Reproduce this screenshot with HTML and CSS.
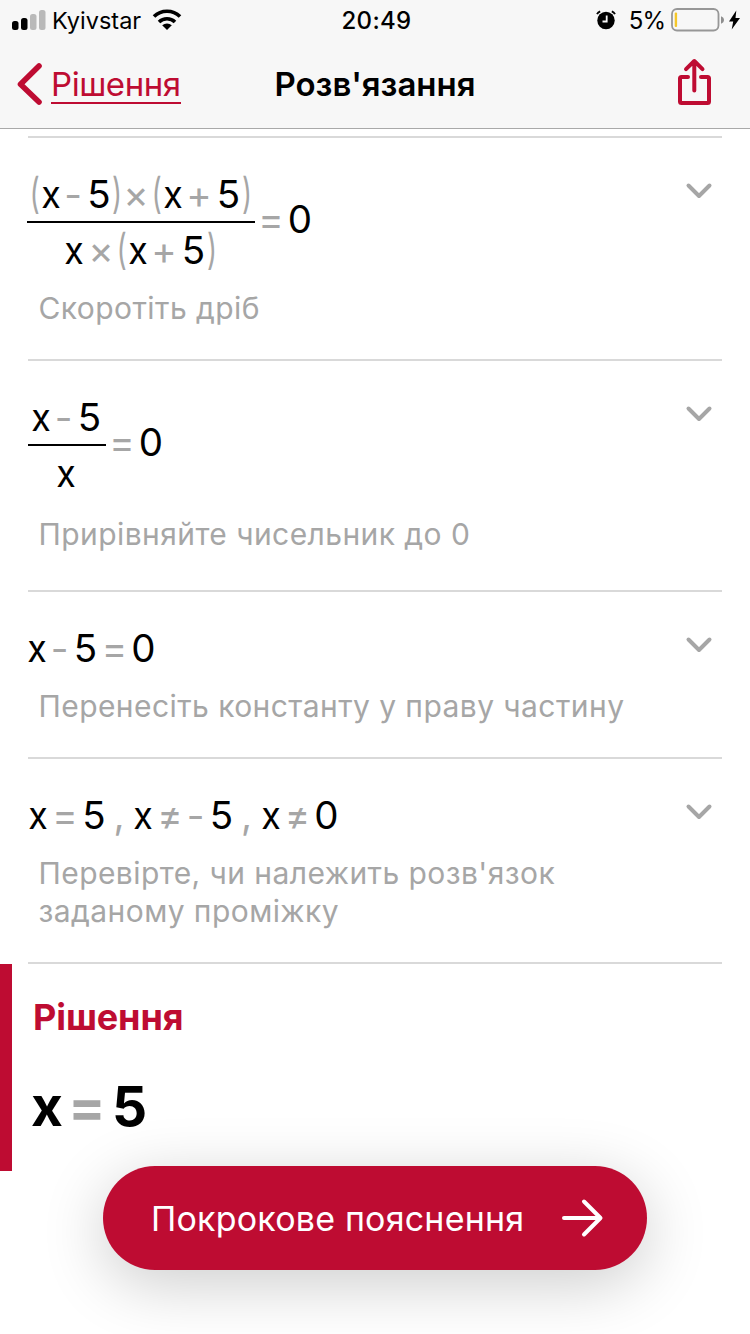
FILE: index.html
```html
<!DOCTYPE html>
<html lang="uk">
<head>
<meta charset="utf-8">
<title>Розв'язання</title>
<link rel="stylesheet" href="styles.css">
</head>
<body>
<div class="screen">
  <header class="header">
    <div class="status">
      <div class="status-left">
        <svg class="signal" width="34" height="22" viewBox="0 0 34 22"><rect x="0" y="12" width="6.500" height="9" rx="2.500"/><rect x="9" y="9" width="6.500" height="12" rx="2.500"/><rect class="dim" x="18" y="5" width="6.500" height="16" rx="2.500"/><rect class="dim" x="27" y="1" width="6.500" height="20" rx="2.500"/></svg>
        <span class="carrier">Kyivstar</span>
        <svg class="wifi" width="30" height="22" viewBox="0 0 30 22"><path d="M2 7.600a18.300 18.300 0 0 1 26 0M7 13a11.500 11.500 0 0 1 16 0" fill="none" stroke="#000" stroke-width="3.600"/><path d="M10.200 16.300a7 7 0 0 1 9.600 0L15 21z"/></svg>
      </div>
      <span class="clock">20:49</span>
      <div class="status-right">
        <svg class="alarm" width="20" height="20" viewBox="0 0 20 20"><circle cx="10" cy="10.500" r="8.700"/><path d="M1 4.200A6 6 0 0 1 4.200 1.300M15.800 1.300a6 6 0 0 1 3.200 2.900" fill="none" stroke="#000" stroke-width="1.800"/><path d="M10.700 5.500v6H6.500" fill="none" stroke="#f7f7f7" stroke-width="1.800"/></svg>
        <span class="percent">5%</span>
        <svg class="battery" width="54" height="24" viewBox="0 0 54 24"><rect x="1" y="1" width="46.500" height="21.500" rx="5" fill="none" stroke="#979797" stroke-width="1.800"/><rect x="3.700" y="4.500" width="2.400" height="14.500" rx="1" fill="#f5c72a"/><path d="M50 8.300c4 1.500 4 6 0 7.500z" fill="#8e8e8e"/></svg>
        <svg class="bolt" width="13" height="20" viewBox="0 0 13 20"><path d="M8.300 0.500L1 11.500h4.200L3.700 19.500 12 8H7.500z"/></svg>
      </div>
    </div>
    <nav class="nav">
      <a class="back"><svg width="26" height="44" viewBox="0 0 26 44"><path d="M22 4L3.500 22.300 22 40" fill="none" stroke="currentColor" stroke-width="5.600" stroke-linecap="round" stroke-linejoin="round"/></svg><span class="back-label">Рішення</span></a>
      <h1 class="title">Розв'язання</h1>
      <svg class="share" width="34" height="48" viewBox="0 0 34 48"><path d="M11 19H4.500Q3 19 3 20.500v23Q3 45 4.500 45h26Q32 45 32 43.500v-23Q32 19 30.500 19H24M17.300 32.500V4M9 11.200L17.300 3l8.200 8.200" fill="none" stroke="currentColor" stroke-width="4" stroke-linecap="round" stroke-linejoin="round"/></svg>
    </nav>
  </header>

  <main class="steps">
    <section class="step step-reduce">
      <div class="math">
        <div class="fraction">
          <div class="row numerator"><i class="open">(</i><b>x</b><i class="minus">-</i><b class="num">5</b><i class="close">)</i><i class="times">×</i><i class="open">(</i><b>x</b><i class="plus">+</i><b class="num">5</b><i class="close">)</i></div>
          <div class="row denominator"><b>x</b><i class="times">×</i><i class="open">(</i><b>x</b><i class="plus">+</i><b class="num">5</b><i class="close">)</i></div>
        </div>
        <div class="row beside"><i class="eq">=</i><b class="num">0</b></div>
      </div>
      <p class="caption">Скоротіть дріб</p>
      <svg class="chevron" width="30" height="20" viewBox="0 0 30 20"><path d="M4.500 4.500L15 15 25.500 4.500"/></svg>
    </section>

    <section class="step step-numerator">
      <div class="math">
        <div class="fraction fraction-small">
          <div class="row numerator"><b>x</b><i class="minus">-</i><b class="num">5</b></div>
          <div class="row denominator"><b>x</b></div>
        </div>
        <div class="row beside"><i class="eq">=</i><b class="num">0</b></div>
      </div>
      <p class="caption">Прирівняйте чисельник до 0</p>
      <svg class="chevron" width="30" height="20" viewBox="0 0 30 20"><path d="M4.500 4.500L15 15 25.500 4.500"/></svg>
    </section>

    <section class="step step-move">
      <div class="math">
        <div class="row"><b>x</b><i class="minus">-</i><b class="num">5</b><i class="eq">=</i><b class="num">0</b></div>
      </div>
      <p class="caption">Перенесіть константу у праву частину</p>
      <svg class="chevron" width="30" height="20" viewBox="0 0 30 20"><path d="M4.500 4.500L15 15 25.500 4.500"/></svg>
    </section>

    <section class="step step-check">
      <div class="math">
        <div class="row"><b>x</b><i class="eq">=</i><b class="num">5</b><i class="comma">,</i><b>x</b><i class="eq">≠</i><i class="minus">-</i><b class="num">5</b><i class="comma">,</i><b>x</b><i class="eq">≠</i><b class="num">0</b></div>
      </div>
      <p class="caption">Перевірте, чи належить розв'язок<br>заданому проміжку</p>
      <svg class="chevron" width="30" height="20" viewBox="0 0 30 20"><path d="M4.500 4.500L15 15 25.500 4.500"/></svg>
    </section>
  </main>

  <section class="solution">
    <h2 class="solution-title">Рішення</h2>
    <div class="answer"><b>x</b><i class="eq">=</i><b class="num">5</b></div>
  </section>

  <button class="explain"><span class="explain-label">Покрокове пояснення</span><svg width="44" height="40" viewBox="0 0 44 40"><path d="M4 20H40M24 3.500L40.500 20 24 36.500" fill="none" stroke="#fff" stroke-width="4" stroke-linecap="round" stroke-linejoin="round"/></svg></button>
</div>
</body>
</html>
```
FILE: styles.css
```css
* { box-sizing: border-box; margin: 0; padding: 0; }
body { background: #fff; font-family: Inter, "Liberation Sans", sans-serif; color: #000; }
svg { display: block; flex: none; }
.screen { position: relative; width: 750px; height: 1334px; overflow: hidden; background: #fff; }

.header { height: 129px; background: #f7f7f7; border-bottom: 1px solid #a9a9a9; }
.status { display: grid; grid-template-columns: 1fr auto 1fr; align-items: center; height: 40px; padding: 0 9px 0 12px; }
.status-left, .status-right { display: flex; align-items: center; }
.status-right { justify-content: flex-end; }
.signal .dim { fill: #b9b9b9; }
.carrier { margin-left: 6px; font-size: 23.500px; letter-spacing: 0; }
.wifi { margin-left: 11px; }
.clock { font-size: 24px; font-weight: 500; letter-spacing: 0.300px; }
.percent { margin: 0 6px 0 13px; font-size: 24px; letter-spacing: -1px; }
.bolt { margin-left: 3px; }

.nav { display: grid; grid-template-columns: 1fr auto 1fr; align-items: center; height: 88px; padding: 0 17px; }
.back { display: flex; align-items: center; color: #be0c32; }
.back-label { margin-left: 8px; font-size: 33px; line-height: 36px; letter-spacing: -0.450px; padding-top: 1px; border-bottom: 2px solid currentColor; }
.title { font-size: 33px; font-weight: 600; }
.share { justify-self: end; margin: -5px 22px 0 0; color: #be0c32; }

.steps { padding: 7px 28px 0; border: 0; }
.step { position: relative; padding-top: 36px; border-bottom: 2px solid #d9d9d9; }
.step-reduce { height: 225px; border-top: 2px solid #d9d9d9; }
.step-numerator { height: 231px; }
.step-move { height: 167px; }
.step-check { height: 205px; }
.math { display: flex; align-items: flex-start; }
.step-move .math { margin-left: -3px; }
.step-check .math { margin-left: -2px; }
.row { display: flex; height: 40px; font-size: 38.500px; line-height: 40px; }
.row b, .row i { display: flex; flex: none; justify-content: center; font-style: normal; font-weight: 400; white-space: nowrap; }
.row b { width: 24px; transform: scaleX(0.930); }
.row .num { width: 28px; transform: none; }
.row i { color: #a6a6a6; }
.row .minus { width: 22.500px; padding-right: 1.500px; }
.row .plus { width: 30px; padding-right: 1px; }
.row .times { width: 32px; padding-right: 2px; }
.row .eq { width: 30px; }
.row .comma { width: 23px; padding-right: 1px; }
.row .open { width: 7.500px; }
.row .close { width: 8px; }
.row .open, .row .close { font-size: 42px; line-height: 38px; transform: scaleX(0.650); }

.fraction { margin-left: -1px; }
.fraction-small { margin-left: 0; }
.numerator { height: 49px; padding: 0 4px; border-bottom: 2px solid #000; }
.fraction-small .numerator { padding: 0 2px 0 1px; }
.denominator { height: 47px; padding: 7px 4px 0 0; justify-content: center; }
.fraction-small .denominator { padding-right: 1px; }
.beside { margin: 25px 0 0 1.500px; }
.caption { margin: 19px 0 0 10.500px; font-size: 30px; line-height: 38px; color: #a6a6a6; letter-spacing: 0.430px; }
.step-numerator .caption { margin-top: 22px; }
.chevron { position: absolute; top: 43px; right: 8px; }
.chevron path { fill: none; stroke: #a6a6a6; stroke-width: 4px; stroke-linecap: round; stroke-linejoin: round; }

.solution { height: 207px; padding: 31px 0 0 20px; border-left: 12px solid #be0c32; }
.solution-title { padding-left: 1px; font-size: 36px; line-height: 44px; font-weight: 700; letter-spacing: -0.100px; color: #be0c32; }
.answer { display: flex; margin-top: 37px; font-size: 55px; line-height: 60px; }
.answer b, .answer i { display: flex; justify-content: center; font-style: normal; font-weight: 700; }
.answer b { width: 30px; }
.answer .eq { width: 50px; color: #a6a6a6; }
.answer .num { width: 35px; }

.explain { position: absolute; left: 103px; top: 1166px; display: flex; align-items: center; justify-content: space-between; width: 544px; height: 104px; padding: 0 43px 0 48px; border: 0; border-radius: 52px; background: #be0c32; color: #fff; font-family: inherit; box-shadow: 0 14px 64px rgba(0, 0, 0, 0.200); }
.explain-label { padding-top: 2px; font-size: 34px; line-height: 40px; letter-spacing: 0.200px; }
```
